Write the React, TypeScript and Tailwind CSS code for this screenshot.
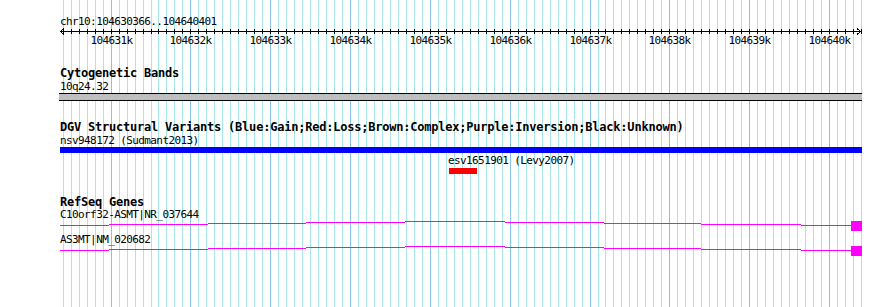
import React from 'react'

const START = 104630366
const END = 104640401
const X0 = 60
const SCALE = 801 / (END - START)

const toX = (p: number) => Math.round(X0 + (p - START) * SCALE)

const gridPositions: number[] = []
for (let p = 104630400; p <= 104640400; p += 100) gridPositions.push(p)

const majors = gridPositions.filter((p) => p % 1000 === 0)

// intron "hat": [x start, x end, row offset from exon top]
const hat: [number, number, number][] = [
  [60, 109, 4],
  [109, 208, 3],
  [208, 306, 2],
  [306, 405, 1],
  [405, 505, 0],
  [505, 604, 1],
  [604, 701, 2],
  [701, 801, 3],
  [801, 851, 4],
]

const Grid = () => (
  <svg className="absolute left-0 top-0" width={890} height={307}>
    {gridPositions.map((p) => (
      <rect
        key={p}
        x={toX(p)}
        y={0}
        width={1}
        height={307}
        fill={p % 1000 === 0 ? '#86c4e6' : '#a6e6ea'}
      />
    ))}
  </svg>
)

const Ruler = () => (
  <svg width={890} height={20} className="block">
    <rect x={60} y={3} width={801} height={1} fill="#000" />
    {gridPositions.map((p) => (
      <rect key={p} x={toX(p)} y={1} width={1} height={5} fill="#000" />
    ))}
    <path d="M64 0.5 L60.5 3.5 L64 6.5" stroke="#000" fill="none" shapeRendering="crispEdges" />
    <path d="M857 0.5 L860.5 3.5 L857 6.5" stroke="#000" fill="none" shapeRendering="crispEdges" />
    {majors.map((p) => (
      <text
        key={p}
        x={toX(p) + 0.5}
        y={16}
        textAnchor="middle"
        fontSize={11}
        letterSpacing={-0.6}
        fill="#000"
        fontFamily="'DejaVu Sans Mono', monospace"
      >
        {p / 1000}k
      </text>
    ))}
  </svg>
)

const Gene = () => (
  <svg width={890} height={11} className="block">
    {hat.map(([a, b, r]) => (
      <rect key={a} x={a} y={r} width={b - a} height={1} fill="#ff00ff" />
    ))}
    <rect x={851} y={0} width={11} height={10} fill="#ff00ff" />
  </svg>
)

const Title = ({ children, h = 'h-[13px]' }: { children: React.ReactNode; h?: string }) => (
  <div className={`${h} pl-[60px] text-[12px] leading-[13px] font-bold tracking-[-0.22px] whitespace-nowrap`}>
    {children}
  </div>
)

const Label = ({ children, className = 'pl-[60px]' }: { children: React.ReactNode; className?: string }) => (
  <div className={`${className} h-[13px] text-[11px] leading-[13px] tracking-[-0.6px] whitespace-nowrap`}>
    {children}
  </div>
)

export default function App() {
  return (
    <div className="relative w-[890px] h-[307px] overflow-hidden bg-white text-black font-['DejaVu_Sans_Mono',monospace]">
      <Grid />
      <div className="relative flex flex-col pt-[15px]">
        <Label>chr10:104630366..104640401</Label>
        <Ruler />

        <div className="mt-[19px]">
          <Title>Cytogenetic Bands</Title>
          <Label>10q24.32</Label>
          <div className="ml-[59px] w-[803px] h-[8px] border-y border-black bg-[#bfbfbf]" />
        </div>

        <div className="mt-[20px]">
          <Title>DGV Structural Variants (Blue:Gain;Red:Loss;Brown:Complex;Purple:Inversion;Black:Unknown)</Title>
          <Label>nsv948172 (Sudmant2013)</Label>
          <div className="ml-[60px] w-[802px] h-[6px] bg-[#0000ff]" />
          <Label className="pl-[448px] mt-[1px]">esv1651901 (Levy2007)</Label>
          <div className="ml-[449px] mt-[1px] w-[28px] h-[6px] bg-[#ff0000]" />
        </div>

        <div className="mt-[22px]">
          <Title h="h-[12px]">RefSeq Genes</Title>
          <Label>C10orf32-ASMT|NR_037644</Label>
          <Gene />
          <div className="h-[1px]" />
          <Label>AS3MT|NM_020682</Label>
          <Gene />
        </div>
      </div>
    </div>
  )
}
